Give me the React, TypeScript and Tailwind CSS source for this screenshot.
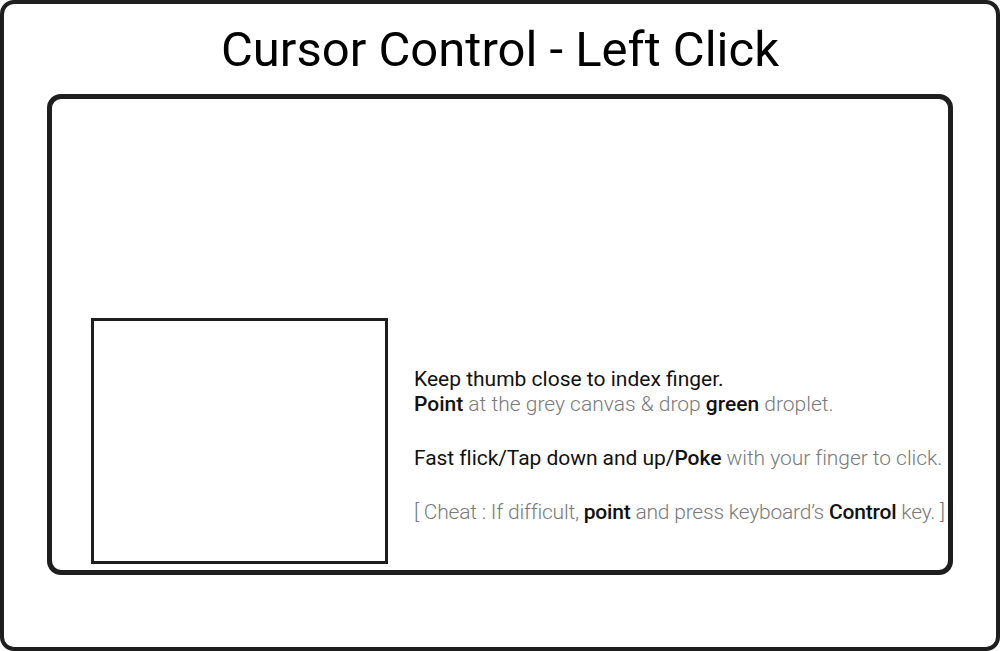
export default function App() {
  const dark = "font-normal text-[#111]"
  const strong = "font-medium text-[#111]"
  const light = "font-light text-[#7a7a7a]"

  return (
    <div className="w-[1000px] h-[651px] bg-white font-['Roboto',sans-serif]">
      <div className="h-full w-full border-[4px] border-[#1e1e1e] rounded-[14px] flex flex-col">
        {/* Title */}
        <div className="h-[90px] flex items-center justify-center">
          <h1 className="text-[49px] leading-none text-black">
            Cursor Control - Left Click
          </h1>
        </div>

        {/* Card */}
        <div className="mx-[43px] h-[481px] border-[5px] border-[#1e1e1e] rounded-[14px] flex flex-col justify-end pb-[6px] pl-[39px]">
          <div className="flex items-center">
            <div className="w-[297px] h-[246px] border-[3px] border-[#1e1e1e] shrink-0" />
            <div className="ml-[26px] text-[21px] leading-[25px] whitespace-nowrap mt-[10px]">
              <p className={dark}>Keep thumb close to index finger.</p>
              <p>
                <span className={strong}>Point</span>
                <span className={light}> at the grey canvas &amp; drop </span>
                <span className={strong}>green</span>
                <span className={light}> droplet.</span>
              </p>
              <p className="mt-[29px] tracking-[-0.05px]">
                <span className={dark}>Fast flick/Tap down and up/</span>
                <span className={strong}>Poke</span>
                <span className={light}> with your finger to click.</span>
              </p>
              <p className="mt-[29px] tracking-[-0.2px]">
                <span className={light}>[ Cheat : If difficult, </span>
                <span className={strong}>point</span>
                <span className={light}> and press keyboard&rsquo;s </span>
                <span className={strong}>Control</span>
                <span className={light}> key. ]</span>
              </p>
            </div>
          </div>
        </div>
      </div>
    </div>
  )
}
